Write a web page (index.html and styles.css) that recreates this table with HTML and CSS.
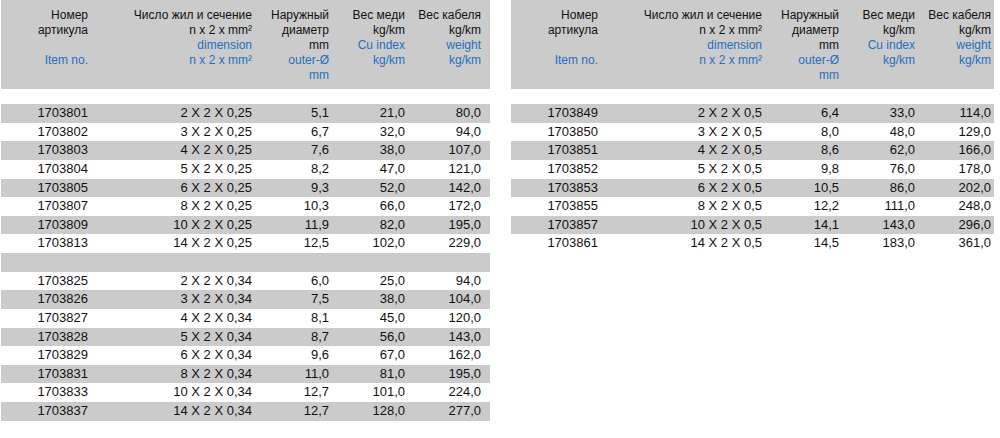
FILE: index.html
```html
<!DOCTYPE html>
<html lang="ru">
<head>
<meta charset="utf-8">
<title>Cable table</title>
<link rel="stylesheet" href="styles.css">
</head>
<body>
<div class="page">
  <div class="tbl tbl-left">
    <div class="row head">
      <div class="c"><span>Номер</span><span>артикула</span><span>&nbsp;</span><span class="en">Item no.</span></div>
      <div class="c"><span>Число жил и сечение</span><span>n x 2 x mm²</span><span class="en">dimension</span><span class="en">n x 2 x mm²</span></div>
      <div class="c"><span>Наружный</span><span>диаметр</span><span>mm</span><span class="en">outer-Ø</span><span class="en">mm</span></div>
      <div class="c"><span>Вес меди</span><span>kg/km</span><span class="en">Cu index</span><span class="en">kg/km</span></div>
      <div class="c"><span>Вес кабеля</span><span>kg/km</span><span class="en">weight</span><span class="en">kg/km</span></div>
    </div>
    <div class="spacer"></div>
    <div class="row g"><div class="c">1703801</div><div class="c">2 X 2 X 0,25</div><div class="c">5,1</div><div class="c">21,0</div><div class="c">80,0</div></div>
    <div class="row"><div class="c">1703802</div><div class="c">3 X 2 X 0,25</div><div class="c">6,7</div><div class="c">32,0</div><div class="c">94,0</div></div>
    <div class="row g"><div class="c">1703803</div><div class="c">4 X 2 X 0,25</div><div class="c">7,6</div><div class="c">38,0</div><div class="c">107,0</div></div>
    <div class="row"><div class="c">1703804</div><div class="c">5 X 2 X 0,25</div><div class="c">8,2</div><div class="c">47,0</div><div class="c">121,0</div></div>
    <div class="row g"><div class="c">1703805</div><div class="c">6 X 2 X 0,25</div><div class="c">9,3</div><div class="c">52,0</div><div class="c">142,0</div></div>
    <div class="row"><div class="c">1703807</div><div class="c">8 X 2 X 0,25</div><div class="c">10,3</div><div class="c">66,0</div><div class="c">172,0</div></div>
    <div class="row g"><div class="c">1703809</div><div class="c">10 X 2 X 0,25</div><div class="c">11,9</div><div class="c">82,0</div><div class="c">195,0</div></div>
    <div class="row"><div class="c">1703813</div><div class="c">14 X 2 X 0,25</div><div class="c">12,5</div><div class="c">102,0</div><div class="c">229,0</div></div>
    <div class="row g"><div class="c"></div><div class="c"></div><div class="c"></div><div class="c"></div><div class="c"></div></div>
    <div class="row"><div class="c">1703825</div><div class="c">2 X 2 X 0,34</div><div class="c">6,0</div><div class="c">25,0</div><div class="c">94,0</div></div>
    <div class="row g"><div class="c">1703826</div><div class="c">3 X 2 X 0,34</div><div class="c">7,5</div><div class="c">38,0</div><div class="c">104,0</div></div>
    <div class="row"><div class="c">1703827</div><div class="c">4 X 2 X 0,34</div><div class="c">8,1</div><div class="c">45,0</div><div class="c">120,0</div></div>
    <div class="row g"><div class="c">1703828</div><div class="c">5 X 2 X 0,34</div><div class="c">8,7</div><div class="c">56,0</div><div class="c">143,0</div></div>
    <div class="row"><div class="c">1703829</div><div class="c">6 X 2 X 0,34</div><div class="c">9,6</div><div class="c">67,0</div><div class="c">162,0</div></div>
    <div class="row g"><div class="c">1703831</div><div class="c">8 X 2 X 0,34</div><div class="c">11,0</div><div class="c">81,0</div><div class="c">195,0</div></div>
    <div class="row"><div class="c">1703833</div><div class="c">10 X 2 X 0,34</div><div class="c">12,7</div><div class="c">101,0</div><div class="c">224,0</div></div>
    <div class="row g"><div class="c">1703837</div><div class="c">14 X 2 X 0,34</div><div class="c">12,7</div><div class="c">128,0</div><div class="c">277,0</div></div>
  </div>

  <div class="tbl tbl-right">
    <div class="row head">
      <div class="c"><span>Номер</span><span>артикула</span><span>&nbsp;</span><span class="en">Item no.</span></div>
      <div class="c"><span>Число жил и сечение</span><span>n x 2 x mm²</span><span class="en">dimension</span><span class="en">n x 2 x mm²</span></div>
      <div class="c"><span>Наружный</span><span>диаметр</span><span>mm</span><span class="en">outer-Ø</span><span class="en">mm</span></div>
      <div class="c"><span>Вес меди</span><span>kg/km</span><span class="en">Cu index</span><span class="en">kg/km</span></div>
      <div class="c"><span>Вес кабеля</span><span>kg/km</span><span class="en">weight</span><span class="en">kg/km</span></div>
    </div>
    <div class="spacer"></div>
    <div class="row g"><div class="c">1703849</div><div class="c">2 X 2 X 0,5</div><div class="c">6,4</div><div class="c">33,0</div><div class="c">114,0</div></div>
    <div class="row"><div class="c">1703850</div><div class="c">3 X 2 X 0,5</div><div class="c">8,0</div><div class="c">48,0</div><div class="c">129,0</div></div>
    <div class="row g"><div class="c">1703851</div><div class="c">4 X 2 X 0,5</div><div class="c">8,6</div><div class="c">62,0</div><div class="c">166,0</div></div>
    <div class="row"><div class="c">1703852</div><div class="c">5 X 2 X 0,5</div><div class="c">9,8</div><div class="c">76,0</div><div class="c">178,0</div></div>
    <div class="row g"><div class="c">1703853</div><div class="c">6 X 2 X 0,5</div><div class="c">10,5</div><div class="c">86,0</div><div class="c">202,0</div></div>
    <div class="row"><div class="c">1703855</div><div class="c">8 X 2 X 0,5</div><div class="c">12,2</div><div class="c">111,0</div><div class="c">248,0</div></div>
    <div class="row g"><div class="c">1703857</div><div class="c">10 X 2 X 0,5</div><div class="c">14,1</div><div class="c">143,0</div><div class="c">296,0</div></div>
    <div class="row"><div class="c">1703861</div><div class="c">14 X 2 X 0,5</div><div class="c">14,5</div><div class="c">183,0</div><div class="c">361,0</div></div>
  </div>
</div>
</body>
</html>
```

FILE: styles.css
```css
html, body {
  margin: 0;
  padding: 0;
  background: #ffffff;
}

body {
  font-family: "Liberation Sans", Arial, sans-serif;
  font-size: 13px;
  color: #111111;
}

.page {
  display: flex;
  align-items: flex-start;
  gap: 21px;
  padding-left: 1px;
}

.tbl-left {
  width: 489px;
}

.tbl-right {
  width: 483px;
}

.row {
  display: grid;
  grid-template-columns: 91px 164px 77px 76px 76px;
  height: 18.63px;
  line-height: 18.63px;
  white-space: nowrap;
}

.row.g {
  background: #cbcbcb;
}

.c {
  text-align: right;
  padding-right: 4px;
}

.row.head {
  height: 89px;
  font-size: 12px;
  line-height: 15px;
  background: #cbcbcb;
  padding-top: 8px;
  box-sizing: border-box;
}

.row.head .c {
  display: flex;
  flex-direction: column;
  align-items: flex-end;
}

.en {
  color: #1f6fc2;
}

.spacer {
  height: 15px;
}
```
